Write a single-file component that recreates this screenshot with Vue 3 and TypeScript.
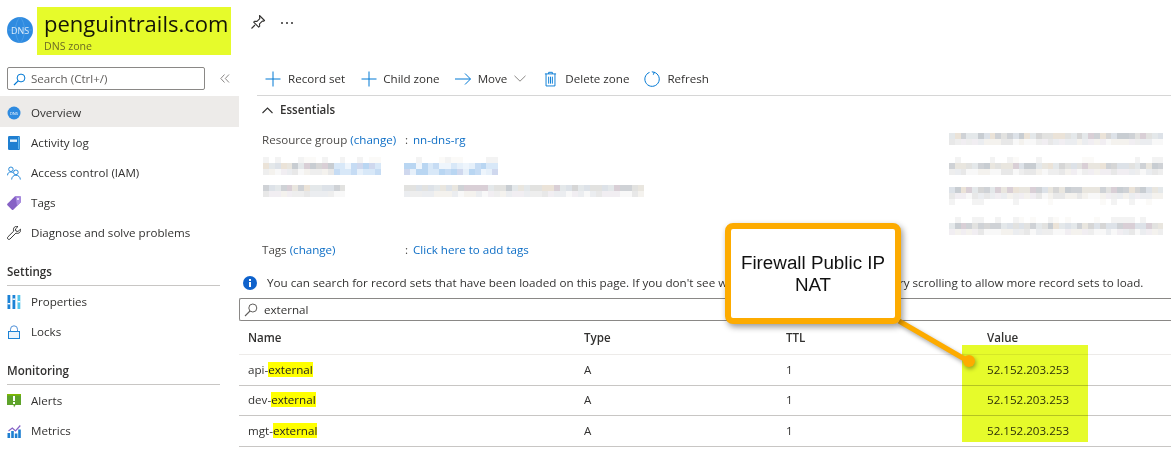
<template>
  <div class="page">
    <header class="page-head">
      <svg class="zone-icon" viewBox="0 0 26 26" aria-hidden="true">
        <circle cx="13" cy="13" r="13" fill="#2f8be0" />
        <path d="M0 13h26M13 0c-6 6-6 20 0 26M13 0c6 6 6 20 0 26" fill="none" stroke="#5aa6ea" stroke-width=".6" />
        <text x="13" y="16.5" text-anchor="middle" class="zone-icon-text">DNS</text>
      </svg>
      <div class="title-block">
        <h1>penguintrails.com</h1>
        <span>DNS zone</span>
      </div>
      <svg class="pin" viewBox="0 0 16 16" aria-hidden="true">
        <path d="M9.5 1.5l5 5-1 .8-1.2-.2-2.8 2.8.2 2.3-1 1-5-5 1-1 2.3.2 2.8-2.8-.2-1.2zM5 11l-3.5 3.5" fill="none" stroke="#323130" stroke-width="1.1" stroke-linejoin="round" />
      </svg>
      <span class="more"><i></i><i></i><i></i></span>
    </header>

    <div class="content">
      <aside class="sidebar">
        <div class="side-search-row">
          <div class="side-search">
            <svg viewBox="0 0 13 13" aria-hidden="true">
              <circle cx="8" cy="5" r="3.9" fill="none" stroke="#0078d4" />
              <path d="M5.2 7.8L1 12" stroke="#0078d4" stroke-width="1.2" />
            </svg>
            <span>Search (Ctrl+/)</span>
          </div>
          <svg class="collapse" viewBox="0 0 10 9" aria-hidden="true">
            <path d="M4.5 .5L.8 4.5l3.7 4M9 .5L5.3 4.5l3.7 4" fill="none" stroke="#8a8886" />
          </svg>
        </div>

        <nav>
          <a class="nav-item active">
            <svg viewBox="0 0 14 14" aria-hidden="true">
              <circle cx="7" cy="7" r="6.5" fill="#2f8be0" />
              <text x="7" y="8.8" text-anchor="middle" class="mini-dns">DNS</text>
            </svg>
            Overview
          </a>
          <a class="nav-item">
            <svg viewBox="0 0 14 14" aria-hidden="true">
              <rect x="1" y="0" width="12" height="14" rx="1.2" fill="#1f7fd1" />
              <rect x="3" y="3.5" width="7" height="2.4" fill="#e8f3fb" />
              <rect x="11" y="1" width="1.4" height="12" fill="#5db2ea" />
            </svg>
            Activity log
          </a>
          <a class="nav-item">
            <svg viewBox="0 0 15 14" aria-hidden="true">
              <g fill="none" stroke="#1b82d6" stroke-width="1">
                <circle cx="4.2" cy="3" r="2.4" />
                <path d="M.6 9.5c0-2.4 1.4-3.6 3.6-3.6 1 0 1.7.2 2.3.7" />
                <circle cx="9.5" cy="6.3" r="2.5" />
                <path d="M5 14c0-2.8 2-4.6 4.5-4.6s4.800 1.800 4.800 4.600" />
              </g>
            </svg>
            Access control (IAM)
          </a>
          <a class="nav-item">
            <svg viewBox="0 0 14 14" aria-hidden="true">
              <path d="M8 .3h5.200c.4 0 .6.3.6.6v5.300L6.300 13.700c-.4.4-1 .4-1.400 0L.4 9.200c-.4-.4-.4-1 0-1.400z" fill="#8661c5" />
              <path d="M8.500 .3h4.700c.4 0 .6.3.6.6v5.300L10 10z" fill="#a98be0" />
              <circle cx="11" cy="3" r="1" fill="#fff" />
            </svg>
            Tags
          </a>
          <a class="nav-item">
            <svg viewBox="0 0 14 14" aria-hidden="true">
              <path d="M13.500 3.200l-2.600 2.300-2-.5-.5-2L11 .5C9.200 0 7.400.6 6.700 2.200c-.4 1-.3 2 .1 2.800L.9 10.900c-.6.600-.6 1.500 0 2.100s1.500.6 2.100 0l5.900-5.900c.9.4 2 .4 2.900 0 1.500-.8 2.100-2.300 1.700-3.900z" fill="none" stroke="#222" stroke-width=".9" stroke-linejoin="round" />
            </svg>
            Diagnose and solve problems
          </a>

          <h2 class="nav-heading">Settings</h2>
          <a class="nav-item">
            <svg viewBox="0 0 14 14" aria-hidden="true">
              <rect x="0.5" y="0" width="2.8" height="14" fill="#1b82d6" />
              <rect x="5.5" y="0" width="2.8" height="14" fill="#1b82d6" />
              <rect x="10.5" y="0" width="2.8" height="14" fill="#50c4ec" />
              <rect x="0.5" y="8" width="2.8" height="1.4" fill="#fff" />
              <rect x="5.5" y="3.5" width="2.8" height="1.4" fill="#fff" />
              <rect x="10.5" y="6" width="2.8" height="1.4" fill="#fff" />
            </svg>
            Properties
          </a>
          <a class="nav-item">
            <svg viewBox="0 0 14 14" aria-hidden="true">
              <rect x="1.5" y="6.5" width="11" height="7" fill="#e9f3fc" stroke="#1b82d6" />
              <path d="M3.500 6.500V4.300a3.500 3.500 0 0 1 7 0v2.200" fill="none" stroke="#4e8fd8" />
            </svg>
            Locks
          </a>

          <h2 class="nav-heading">Monitoring</h2>
          <a class="nav-item">
            <svg viewBox="0 0 14 14" aria-hidden="true">
              <path d="M0 0h14v11H8.500L7 13.500 6.500 11H0z" fill="#5ea32b" />
              <path d="M0 0h14v1.500H0z" fill="#7fba00" />
              <rect x="6" y="2" width="2" height="5" fill="#fff" />
              <rect x="6" y="8" width="2" height="2" fill="#fff" />
            </svg>
            Alerts
          </a>
          <a class="nav-item">
            <svg viewBox="0 0 14 14" aria-hidden="true">
              <rect x="0.5" y="9" width="2.6" height="5" fill="#1f7fd1" />
              <rect x="4.2" y="7" width="2.6" height="7" fill="#1f7fd1" />
              <rect x="7.8" y="9.5" width="2.6" height="4.5" fill="#1f7fd1" />
              <rect x="11.2" y="5.5" width="2.6" height="8.5" fill="#1f7fd1" />
              <path d="M1.500 7l3.800-3 3.200 3 4.800-5.500" fill="none" stroke="#8661c5" stroke-width="1.200" />
            </svg>
            Metrics
          </a>
        </nav>
      </aside>

      <main class="main">
        <div class="toolbar">
          <button class="tool">
            <svg viewBox="0 0 16 16" aria-hidden="true"><path d="M8 .5v15M.5 8h15" stroke="#0078d4" /></svg>
            Record set
          </button>
          <button class="tool child">
            <svg viewBox="0 0 16 16" aria-hidden="true"><path d="M8 .5v15M.5 8h15" stroke="#0078d4" /></svg>
            Child zone
          </button>
          <button class="tool move">
            <svg viewBox="0 0 16 16" aria-hidden="true"><path d="M0 8h15.300M10 2.500L15.500 8 10 13.500" fill="none" stroke="#0078d4" /></svg>
            Move
            <svg class="chevron" viewBox="0 0 12 7" aria-hidden="true"><path d="M.5 .8L6 6.200 11.500 .8" fill="none" stroke="#8a8886" /></svg>
          </button>
          <button class="tool trash">
            <svg viewBox="0 0 14 16" aria-hidden="true">
              <path d="M1 2.500h12M5 2.500V.8h4v1.700M2.200 2.500v13h9.600v-13M5 5.500v7.500M7 5.500v7.500M9 5.500v7.500" fill="none" stroke="#0078d4" />
            </svg>
            Delete zone
          </button>
          <button class="tool refresh">
            <svg viewBox="0 0 16 16" aria-hidden="true">
              <path d="M5.500 1.400A7.200 7.200 0 1 0 10 1.200M7.800 .8L10.300 1.300 9.300 3.700" fill="none" stroke="#0078d4" />
            </svg>
            Refresh
          </button>
        </div>

        <section class="essentials">
          <div class="essentials-head">
            <svg viewBox="0 0 11 7" aria-hidden="true"><path d="M.5 6L5.500 1l5 5" fill="none" stroke="#323130" stroke-width="1.100" /></svg>
            <strong>Essentials</strong>
          </div>
          <div class="essentials-body">
            <div class="props">
              <div class="prop first">
                <span class="prop-label">Resource group <a>(change)</a></span>
                <span class="colon">:</span>
                <a>nn-dns-rg</a>
              </div>
              <div class="blur-row first-blur">
                <div class="mosaic-wrap label-blur"><div v-for="(c, i) in leftBlocks[0]" :key="i" class="cell" :style="{ background: c }"></div></div>
                <div class="mosaic-wrap value-blur"><div v-for="(c, i) in leftBlocks[1]" :key="i" class="cell" :style="{ background: c }"></div></div>
              </div>
              <div class="blur-row second-blur">
                <div class="mosaic-wrap label-blur"><div v-for="(c, i) in leftBlocks[2]" :key="i" class="cell" :style="{ background: c }"></div></div>
                <div class="mosaic-wrap value-blur wide"><div v-for="(c, i) in leftBlocks[3]" :key="i" class="cell" :style="{ background: c }"></div></div>
              </div>
              <div class="prop tags">
                <span class="prop-label">Tags <a>(change)</a></span>
                <span class="colon">:</span>
                <a>Click here to add tags</a>
              </div>
            </div>
            <div class="right-blur">
              <div v-for="(block, b) in rightBlocks" :key="b" class="mosaic-wrap right">
                <div v-for="(c, i) in block" :key="i" class="cell" :style="{ background: c }"></div>
              </div>
            </div>
          </div>
        </section>

        <div class="notice">
          <svg viewBox="0 0 14 14" aria-hidden="true">
            <circle cx="7" cy="7" r="7" fill="#0f62cc" />
            <rect x="6" y="6" width="2" height="5" fill="#fff" />
            <rect x="6" y="3" width="2" height="2" fill="#fff" />
          </svg>
          <span>You can search for record sets that have been loaded on this page. If you don't see what you're looking for, you can try scrolling to allow more record sets to load.</span>
        </div>

        <div class="filter">
          <svg viewBox="0 0 14 14" aria-hidden="true">
            <circle cx="8.800" cy="5" r="4" fill="none" stroke="#605e5c" />
            <path d="M6 8L1 13" stroke="#605e5c" stroke-width="1.100" />
          </svg>
          <span>external</span>
        </div>

        <div class="table">
          <div class="table-row table-header">
            <span>Name</span><span>Type</span><span>TTL</span><span>Value</span>
          </div>
          <div v-for="row in records" :key="row.prefix" class="table-row">
            <span>{{ row.prefix }}<mark>external</mark></span>
            <span>A</span>
            <span>1</span>
            <span>52.152.203.253</span>
          </div>
        </div>
      </main>
    </div>

    <!-- annotations drawn on top of the screenshot -->
    <div class="value-highlight"></div>
    <svg class="connector" viewBox="0 0 1171 453" aria-hidden="true">
      <path d="M899 321L968 361" stroke="#fdab00" stroke-width="5" />
      <circle cx="969" cy="361" r="6" fill="#fdab00" />
    </svg>
    <div class="callout">Firewall Public IP<br />NAT</div>
  </div>
</template>

<script setup lang="ts">
interface RecordRow {
  prefix: string
}

const records: RecordRow[] = [{ prefix: 'api-' }, { prefix: 'dev-' }, { prefix: 'mgt-' }]

const dark = ['#d6d6d6', '#e2e2e0', '#cfd2d6', '#e9e6df', '#dde2e8', '#d9cfd6', '#ebe3d8', '#c8cdd2', '#e4e8ea']
const light = ['#eeeeee', '#f4f2ee', '#f8f8f8', '#ebedf0', '#f1eef2', '#e8e8e8']
const sparse = ['#ffffff', '#ffffff', '#ffffff', '#fbfaf8', '#f3f3f3']
const blue = ['#c6dcf4', '#d8e8f8', '#b9d6f2', '#e6f0fa', '#cfd8ee', '#eef5fc']

// rows is a string with one palette letter per row of the mosaic
const mosaic = (cols: number, rows: string, seed: number, blueFrom = 1): string[] => {
  const cells: string[] = []
  let n = seed
  for (const row of rows) {
    for (let c = 0; c < cols; c++) {
      n = (n * 1103515245 + 12345) % 2147483648
      const pick = Math.floor(n / 65536)
      let palette = row === 'd' ? dark : row === 'l' ? light : sparse
      if (row !== 's' && c / cols >= blueFrom) palette = blue
      cells.push(palette[pick % palette.length])
    }
  }
  return cells
}

const leftBlocks: string[][] = [
  mosaic(20, 'sdl', 7, 0.6),
  mosaic(16, 'sdl', 19, 0),
  mosaic(14, 'dl', 31),
  mosaic(40, 'dl', 43),
]

const rightBlocks: string[][] = [
  mosaic(37, 'dl', 3),
  mosaic(37, 'sdl', 11),
  mosaic(37, 'dls', 23),
  mosaic(37, 'sdl', 37),
]
</script>

<style>
html,
body {
  margin: 0;
  background: #fff;
}
</style>

<style scoped>
.page {
  position: relative;
  width: 1171px;
  height: 453px;
  overflow: hidden;
  background: #fff;
  color: #323130;
  font: 11.6px/16px 'Open Sans', 'Noto Sans', sans-serif;
}

.page-head {
  display: flex;
  height: 60px;
  padding-left: 7px;
  box-sizing: border-box;
}

.zone-icon {
  width: 26px;
  height: 26px;
  margin-top: 17px;
}

.zone-icon-text {
  font-size: 9px;
  fill: #dcecfa;
}

.title-block {
  width: 194px;
  height: 48px;
  margin: 7px 0 0 4px;
  padding-left: 7px;
  box-sizing: border-box;
  background: #e6fb2b;
}

.title-block h1 {
  margin: 0;
  padding-top: 1px;
  font-size: 22px;
  line-height: 31px;
  font-weight: 500;
  color: #141408;
  white-space: nowrap;
}

.title-block span {
  display: block;
  font-size: 10.6px;
  line-height: 14px;
  color: #6b6b25;
}

.pin {
  width: 16px;
  height: 16px;
  margin: 14px 0 0 19px;
}

.more {
  display: flex;
  gap: 3px;
  margin: 22px 0 0 15px;
}

.more i {
  width: 2px;
  height: 2px;
  background: #323130;
  border-radius: 50%;
}

.content {
  display: flex;
}

.sidebar {
  width: 239px;
  flex: none;
}

.side-search-row {
  display: flex;
  align-items: center;
  height: 23px;
  margin: 7px 0 6px 7px;
}

.side-search {
  display: flex;
  align-items: center;
  gap: 5px;
  width: 198px;
  height: 23px;
  padding: 1px 0 0 5px;
  box-sizing: border-box;
  border: 1px solid #8a8886;
  border-radius: 2px;
  color: #605e5c;
}

.side-search svg {
  width: 13px;
  height: 13px;
}

.collapse {
  width: 10px;
  height: 9px;
  margin-left: 15px;
}

.nav-item {
  display: flex;
  align-items: center;
  gap: 10px;
  height: 30px;
  padding: 2px 0 0 7px;
  box-sizing: border-box;
}

.nav-item svg {
  width: 14px;
  height: 14px;
  flex: none;
}

.nav-item.active {
  height: 31px;
  background: #edebe9;
}

.mini-dns {
  font-size: 4px;
  fill: #fff;
}

.nav-heading {
  display: flex;
  align-items: center;
  height: 39px;
  padding-top: 12px;
  box-sizing: border-box;
  margin: 0 19px 0 7px;
  font-size: 11.6px;
  font-weight: 600;
  border-bottom: 1px solid #c8c6c4;
}

.main {
  flex: 1;
  min-width: 0;
}

.toolbar {
  display: flex;
  align-items: center;
  height: 36px;
  margin-left: 18px;
  padding: 2px 0 0 8px;
  box-sizing: border-box;
  border-bottom: 1px solid #d6d6d6;
}

.tool {
  display: flex;
  align-items: center;
  gap: 7px;
  padding: 0;
  border: 0;
  background: none;
  color: inherit;
  font: inherit;
}

.tool svg {
  width: 16px;
  height: 16px;
}

.tool.child {
  gap: 6px;
  margin-left: 16px;
}

.tool.move {
  margin-left: 15px;
}

.tool .chevron {
  width: 12px;
  height: 7px;
}

.tool.trash {
  gap: 8px;
  margin-left: 18px;
}

.tool.trash svg {
  width: 13px;
}

.tool.refresh {
  margin-left: 15px;
}

.essentials {
  padding-left: 23px;
}

.essentials-head {
  display: flex;
  align-items: center;
  gap: 7px;
  height: 28px;
}

.essentials-head svg {
  width: 11px;
  height: 7px;
}

.essentials-head strong {
  font-weight: 600;
}

.essentials-body {
  display: flex;
  justify-content: space-between;
  height: 134px;
  padding: 9px 8px 0 0;
  box-sizing: border-box;
}

.props {
  display: flex;
  flex-direction: column;
}

.prop {
  display: flex;
  color: #4c4a48;
}

.prop.first {
  height: 12px;
  line-height: 13px;
}

.prop.tags {
  margin-top: auto;
}

.prop a,
.prop-label a {
  color: #0f6fc6;
}

.prop-label {
  width: 143px;
}

.colon {
  width: 8px;
}

.blur-row {
  display: flex;
  margin-left: 1px;
}

.first-blur {
  margin-top: 12px;
}

.second-blur {
  margin-top: 10px;
}

.mosaic-wrap {
  display: grid;
  grid-auto-rows: 6px;
  align-self: flex-start;
}

.label-blur {
  grid-template-columns: repeat(20, 5.9px);
  width: 141px;
}

.second-blur .label-blur {
  grid-template-columns: repeat(14, 5.9px);
}

.value-blur {
  grid-template-columns: repeat(16, 5.9px);
}

.value-blur.wide {
  grid-template-columns: repeat(40, 6px);
}

.right-blur {
  display: flex;
  flex-direction: column;
  gap: 12px;
  width: 214px;
}

.right {
  grid-template-columns: repeat(37, 5.8px);
}

.notice {
  display: flex;
  align-items: center;
  gap: 10px;
  height: 16px;
  margin: 17px 0 7px 4px;
  font-size: 11.68px;
  white-space: nowrap;
}

.notice svg {
  width: 14px;
  height: 14px;
  flex: none;
}

.filter {
  display: flex;
  align-items: center;
  gap: 6px;
  height: 23px;
  padding-left: 4px;
  box-sizing: border-box;
  border: 1px solid #8a8886;
  border-right: 0;
  border-radius: 2px 0 0 2px;
}

.filter svg {
  width: 14px;
  height: 14px;
}

.table-row {
  display: grid;
  grid-template-columns: 336px 202px 201px 1fr;
  align-items: center;
  height: 30.5px;
  padding-left: 9px;
  box-sizing: border-box;
  border-bottom: 1px solid #c8c6c4;
}

.table-header {
  height: 34px;
  font-weight: 600;
  border-bottom-color: #edebe9;
}

mark {
  background: #ffff00;
  color: #222;
}

.value-highlight {
  position: absolute;
  left: 962px;
  top: 345px;
  width: 126px;
  height: 97px;
  background: #e6fb2b;
  mix-blend-mode: multiply;
}

.connector {
  position: absolute;
  inset: 0;
  width: 1171px;
  height: 453px;
  filter: drop-shadow(1px 2px 2px rgba(0, 0, 0, 0.35));
}

.callout {
  position: absolute;
  left: 725px;
  top: 223px;
  display: flex;
  align-items: center;
  justify-content: center;
  width: 176px;
  height: 101px;
  box-sizing: border-box;
  border: 6px solid #fdab00;
  border-radius: 8px;
  background: #fff;
  box-shadow: 2px 3px 6px rgba(0, 0, 0, 0.4);
  color: #111;
  font: 18.8px/22px 'Liberation Sans', Arial, sans-serif;
  text-align: center;
}
</style>
